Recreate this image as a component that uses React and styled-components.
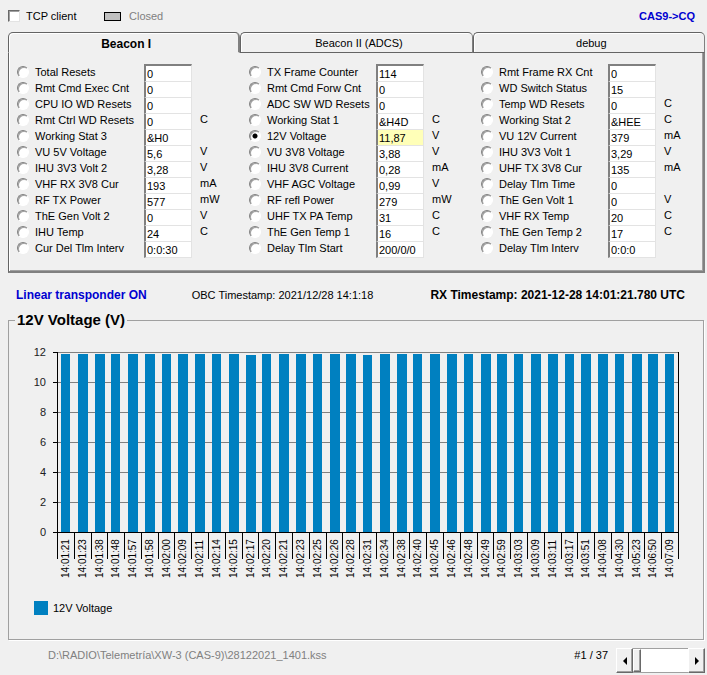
import React, { useState } from 'react';
import styled, { createGlobalStyle, css } from 'styled-components';

const GlobalStyle = createGlobalStyle`
  *, *::before, *::after {
    box-sizing: border-box;
  }

  body {
    margin: 0;
    background: #f0f0f0;
    color: #000;
    font: 11px/12px "Liberation Sans", Arial, sans-serif;
  }

  button, input {
    font: inherit;
    color: inherit;
  }
`;

const TABS = ['Beacon I', 'Beacon II (ADCS)', 'debug'];

// [label, value, unit]
const COLUMNS = [
  [
    ['Total Resets', '0', ''],
    ['Rmt Cmd Exec Cnt', '0', ''],
    ['CPU IO WD Resets', '0', ''],
    ['Rmt Ctrl WD Resets', '0', 'C'],
    ['Working Stat 3', '&H0', ''],
    ['VU 5V Voltage', '5,6', 'V'],
    ['IHU 3V3 Volt 2', '3,28', 'V'],
    ['VHF RX 3V8 Cur', '193', 'mA'],
    ['RF TX Power', '577', 'mW'],
    ['ThE Gen Volt 2', '0', 'V'],
    ['IHU Temp', '24', 'C'],
    ['Cur Del Tlm Interv', '0:0:30', '']
  ],
  [
    ['TX Frame Counter', '114', ''],
    ['Rmt Cmd Forw Cnt', '0', ''],
    ['ADC SW WD Resets', '0', ''],
    ['Working Stat 1', '&H4D', 'C'],
    ['12V Voltage', '11,87', 'V'],
    ['VU 3V8 Voltage', '3,88', 'V'],
    ['IHU 3V8 Current', '0,28', 'mA'],
    ['VHF AGC Voltage', '0,99', 'V'],
    ['RF refl Power', '279', 'mW'],
    ['UHF TX PA Temp', '31', 'C'],
    ['ThE Gen Temp 1', '16', 'C'],
    ['Delay Tlm Start', '200/0/0', '']
  ],
  [
    ['Rmt Frame RX Cnt', '0', ''],
    ['WD Switch Status', '15', ''],
    ['Temp WD Resets', '0', 'C'],
    ['Working Stat 2', '&HEE', 'C'],
    ['VU 12V Current', '379', 'mA'],
    ['IHU 3V3 Volt 1', '3,29', 'V'],
    ['UHF TX 3V8 Cur', '135', 'mA'],
    ['Delay Tlm Time', '0', ''],
    ['ThE Gen Volt 1', '0', 'V'],
    ['VHF RX Temp', '20', 'C'],
    ['ThE Gen Temp 2', '17', 'C'],
    ['Delay Tlm Interv', '0:0:0', '']
  ]
];

const TIMES = [
  '14:01:21', '14:01:23', '14:01:38', '14:01:48', '14:01:57', '14:01:58',
  '14:02:00', '14:02:09', '14:02:11', '14:02:14', '14:02:15', '14:02:17',
  '14:02:20', '14:02:21', '14:02:23', '14:02:25', '14:02:26', '14:02:28',
  '14:02:31', '14:02:34', '14:02:38', '14:02:40', '14:02:45', '14:02:46',
  '14:02:48', '14:02:49', '14:02:59', '14:03:03', '14:03:09', '14:03:11',
  '14:03:17', '14:03:51', '14:04:08', '14:04:30', '14:05:23', '14:06:50',
  '14:07:09'
];

const SAMPLES = TIMES.map((time) => ({
  time,
  volts: time === '14:02:17' || time === '14:02:31' ? 11.8 : 11.87
}));

const Window = styled.main`
  padding: 0 2px 2px 8px;
`;

const TopBar = styled.header`
  display: flex;
  align-items: center;
  height: 32px;
  padding: 0 10px 0 0;
`;

const CheckLabel = styled.label`
  display: flex;
  align-items: center;
  gap: 6px;
  width: 96px;
`;

const CheckBox = styled.input.attrs({ type: 'checkbox' })`
  appearance: none;
  width: 12px;
  height: 12px;
  margin: 0;
  background: #fff;
  border: 1px solid;
  border-color: #696969 #e3e3e3 #e3e3e3 #696969;
  box-shadow: inset 1px 1px 0 #a0a0a0;

  &:checked {
    background: #000;
    box-shadow: inset 0 0 0 2px #fff;
  }
`;

const Led = styled.span`
  width: 17px;
  height: 9px;
  margin-right: 8px;
  background: #c0c0c0;
  border: 1px solid #000;
`;

const Muted = styled.span`
  color: #808080;
`;

const Strong = styled.strong`
  font-size: ${p => p.$size || 11}px;
  color: ${p => p.$color || '#000'};
  margin-left: ${p => (p.$end ? 'auto' : 0)};
`;

const TabStrip = styled.div`
  display: grid;
  grid-template-columns: repeat(3, 1fr);
  height: 21px;
`;

const Tab = styled.button.attrs({ type: 'button', role: 'tab' })`
  padding: 0 0 0 5px;
  background: #f0f0f0;
  border: 1px solid #646464;
  border-right-color: #808080;
  border-radius: 5px 5px 0 0;
  box-shadow: inset 1px 1px 0 #fff;

  ${p => p['aria-selected'] && css`
    padding-top: 2px;
    border-bottom-color: transparent;
    border-right: 2px solid #808080;
    font-size: 12px;
    font-weight: bold;
  `}
`;

const Panel = styled.section`
  display: grid;
  grid-template-columns: repeat(3, 1fr);
  padding: 11px 0 13px;
  border: solid;
  border-width: 0 0 2px 1px;
  border-color: #808080 #808080 #808080 #646464;
  box-shadow: inset 1px 0 0 #fff, inset -2px 0 0 #808080, inset -3px -1px 0 #a0a0a0;
`;

const Column = styled.div`
  padding-left: 8px;
`;

const Row = styled.div`
  display: grid;
  grid-template-columns: 119px 48px 1fr;
  column-gap: 8px;
  height: 16px;

  &:first-child {
    height: 18px;
  }
`;

const RadioLabel = styled.label`
  display: flex;
  align-items: center;
  gap: 6px;
  height: 12px;
  white-space: nowrap;

  ${Row}:first-child & {
    margin-top: 2px;
  }
`;

const Radio = styled.input.attrs({ type: 'radio' })`
  appearance: none;
  flex: none;
  width: 12px;
  height: 12px;
  margin: 0;
  border: 1px solid;
  border-color: #808080 #fff #fff #808080;
  border-radius: 50%;
  background: #fff;
  box-shadow: inset 1px 1px 0 #a0a0a0;

  &:checked {
    background: radial-gradient(circle, #000 2px, #fff 3px);
  }
`;

const Value = styled.input`
  width: 48px;
  height: 100%;
  padding: 0 0 0 1px;
  border: solid;
  border-width: 0 1px 1px 2px;
  border-color: #808080 #e3e3e3 #e3e3e3 #808080;
  background: ${p => (p.$active ? '#ffffb8' : '#fff')};
  outline: none;

  ${Row}:first-child & {
    border-top-width: 2px;
  }
`;

const Unit = styled.span`
  line-height: 10px;

  ${Row}:first-child & {
    margin-top: 2px;
  }
`;

const StatusRow = styled.div`
  display: flex;
  align-items: center;
  height: 39px;
  padding: 4px 20px 0 8px;
`;

const Timestamp = styled.span`
  margin-left: 45px;
`;

const ChartBox = styled.fieldset`
  min-width: 0;
  margin: 0 1px 0 0;
  padding: 0;
  border: 1px solid #a0a0a0;
  box-shadow: 1px 1px 0 #fff;
`;

const ChartTitle = styled.legend`
  margin-left: 6px;
  padding: 0 2px;
  font-size: 15px;
  line-height: 16px;
  font-weight: bold;
`;

const Plot = styled.svg`
  display: block;
  width: 100%;
  height: auto;
  font-size: 11px;
`;

const Time = styled.text`
  font-size: 10px;
`;

const Legend = styled.div`
  display: flex;
  align-items: center;
  gap: 5px;
  padding: 21px 25px 24px;
`;

const Swatch = styled.span`
  width: 14px;
  height: 14px;
  background: #0080c0;
`;

const Footer = styled.footer`
  display: flex;
  align-items: flex-start;
  padding: 8px 0 0 40px;
`;

const FooterText = styled.span`
  line-height: 14px;
  color: ${p => (p.$muted ? '#808080' : '#000')};
  margin-right: ${p => (p.$muted ? 'auto' : '8px')};
`;

const ScrollBar = styled.div`
  display: flex;
  width: 89px;
  height: 25px;
`;

const raised = css`
  background: #f0f0f0;
  border: 1px solid;
  border-color: #fff #696969 #696969 #fff;
  box-shadow: inset -1px -1px 0 #a0a0a0;
`;

const ArrowButton = styled.button.attrs({ type: 'button' })`
  display: flex;
  align-items: center;
  justify-content: center;
  width: 17px;
  padding: 0;
  ${raised}
`;

const Slider = styled.input.attrs({ type: 'range' })`
  appearance: none;
  flex: 1;
  min-width: 0;
  height: 100%;
  margin: 0;
  background: #fff;
  border: solid #a0a0a0;
  border-width: 1px 0;

  &::-webkit-slider-thumb {
    appearance: none;
    width: 8px;
    height: 23px;
    ${raised}
  }
`;

const AXIS = { left: 48, right: 669, top: 24, bottom: 204, max: 12 };

const yFor = volts =>
  AXIS.bottom - (volts / AXIS.max) * (AXIS.bottom - AXIS.top);

const BarChart = ({ samples }) => {
  const step = (AXIS.right - AXIS.left) / samples.length;
  const ticks = [0, 2, 4, 6, 8, 10, 12];

  return (
    <Plot viewBox="0 0 694 252" role="img" aria-label="12V Voltage">
      <g shapeRendering="crispEdges">
        {ticks.map(t =>
          <g key={t}>
            <rect x={AXIS.left} y={yFor(t)} width={AXIS.right - AXIS.left} height="1" fill="#808080"/>
            <rect x={AXIS.left - 4} y={yFor(t)} width="5" height="1"/>
          </g>)}
        {samples.map((s, i) => {
          const x = Math.round(AXIS.left + i * step);
          const y = Math.round(yFor(s.volts));
          return (
            <g key={s.time}>
              <rect x={x + 4} y={y} width={i % 3 ? 10 : 9} height={AXIS.bottom - y} fill="#0080c0"/>
              <rect x={x} y={AXIS.bottom} width="1" height="27"/>
            </g>
          );
        })}
        <rect x={AXIS.left} y={AXIS.top} width="1" height={AXIS.bottom - AXIS.top}/>
        <rect x={AXIS.right} y={AXIS.top} width="1" height={AXIS.bottom - AXIS.top + 27}/>
        <rect x={AXIS.left} y={AXIS.bottom} width={AXIS.right - AXIS.left} height="1"/>
      </g>
      {ticks.map(t =>
        <text key={t} x="37" y={yFor(t) + 4} textAnchor="end" fill="#202020">{t}</text>)}
      {samples.map((s, i) => {
        const x = Math.round(AXIS.left + i * step) + 12;
        return <Time key={s.time} transform={`translate(${x} 250) rotate(-90)`}>{s.time}</Time>;
      })}
    </Plot>
  );
};

const Channel = ({ label, value, unit, selected, onSelect }) => (
  <Row>
    <RadioLabel>
      <Radio name="channel" checked={selected} onChange={onSelect}/>
      {label}
    </RadioLabel>
    <Value aria-label={label} value={value} readOnly $active={selected}/>
    <Unit>{unit}</Unit>
  </Row>
);

export default function App() {
  const [tab, setTab] = useState(0);
  const [channel, setChannel] = useState('1-4');
  const [frame, setFrame] = useState(1);

  return (
    <Window>
      <GlobalStyle/>
      <TopBar>
        <CheckLabel><CheckBox/>TCP client</CheckLabel>
        <Led/>
        <Muted>Closed</Muted>
        <Strong $color="#0000d0" $end>CAS9-&gt;CQ</Strong>
      </TopBar>

      <TabStrip role="tablist">
        {TABS.map((name, i) =>
          <Tab key={name} aria-selected={tab === i} onClick={() => setTab(i)}>{name}</Tab>)}
      </TabStrip>
      <Panel>
        {COLUMNS.map((rows, c) =>
          <Column key={c}>
            {rows.map(([label, value, unit], r) =>
              <Channel
                key={label}
                label={label}
                value={value}
                unit={unit}
                selected={channel === `${c}-${r}`}
                onSelect={() => setChannel(`${c}-${r}`)}
              />)}
          </Column>)}
      </Panel>

      <StatusRow>
        <Strong $color="#0000d0" $size={12}>Linear transponder ON</Strong>
        <Timestamp>OBC Timestamp: 2021/12/28 14:1:18</Timestamp>
        <Strong $size={12} $end>RX Timestamp: 2021-12-28 14:01:21.780 UTC</Strong>
      </StatusRow>

      <ChartBox>
        <ChartTitle>12V Voltage (V)</ChartTitle>
        <BarChart samples={SAMPLES}/>
        <Legend><Swatch/>12V Voltage</Legend>
      </ChartBox>

      <Footer>
        <FooterText $muted>D:\RADIO\Telemetría\XW-3 (CAS-9)\28122021_1401.kss</FooterText>
        <FooterText>#{frame} / 37</FooterText>
        <ScrollBar>
          <ArrowButton aria-label="Previous frame" onClick={() => setFrame(Math.max(1, frame - 1))}>
            <svg width="4" height="8" viewBox="0 0 4 8"><path d="M4 0v8L0 4z"/></svg>
          </ArrowButton>
          <Slider
            aria-label="Frame"
            min="1"
            max="37"
            value={frame}
            onChange={e => setFrame(Number(e.target.value))}
          />
          <ArrowButton aria-label="Next frame" onClick={() => setFrame(Math.min(37, frame + 1))}>
            <svg width="4" height="8" viewBox="0 0 4 8"><path d="M0 0v8l4-4z"/></svg>
          </ArrowButton>
        </ScrollBar>
      </Footer>
    </Window>
  );
}
